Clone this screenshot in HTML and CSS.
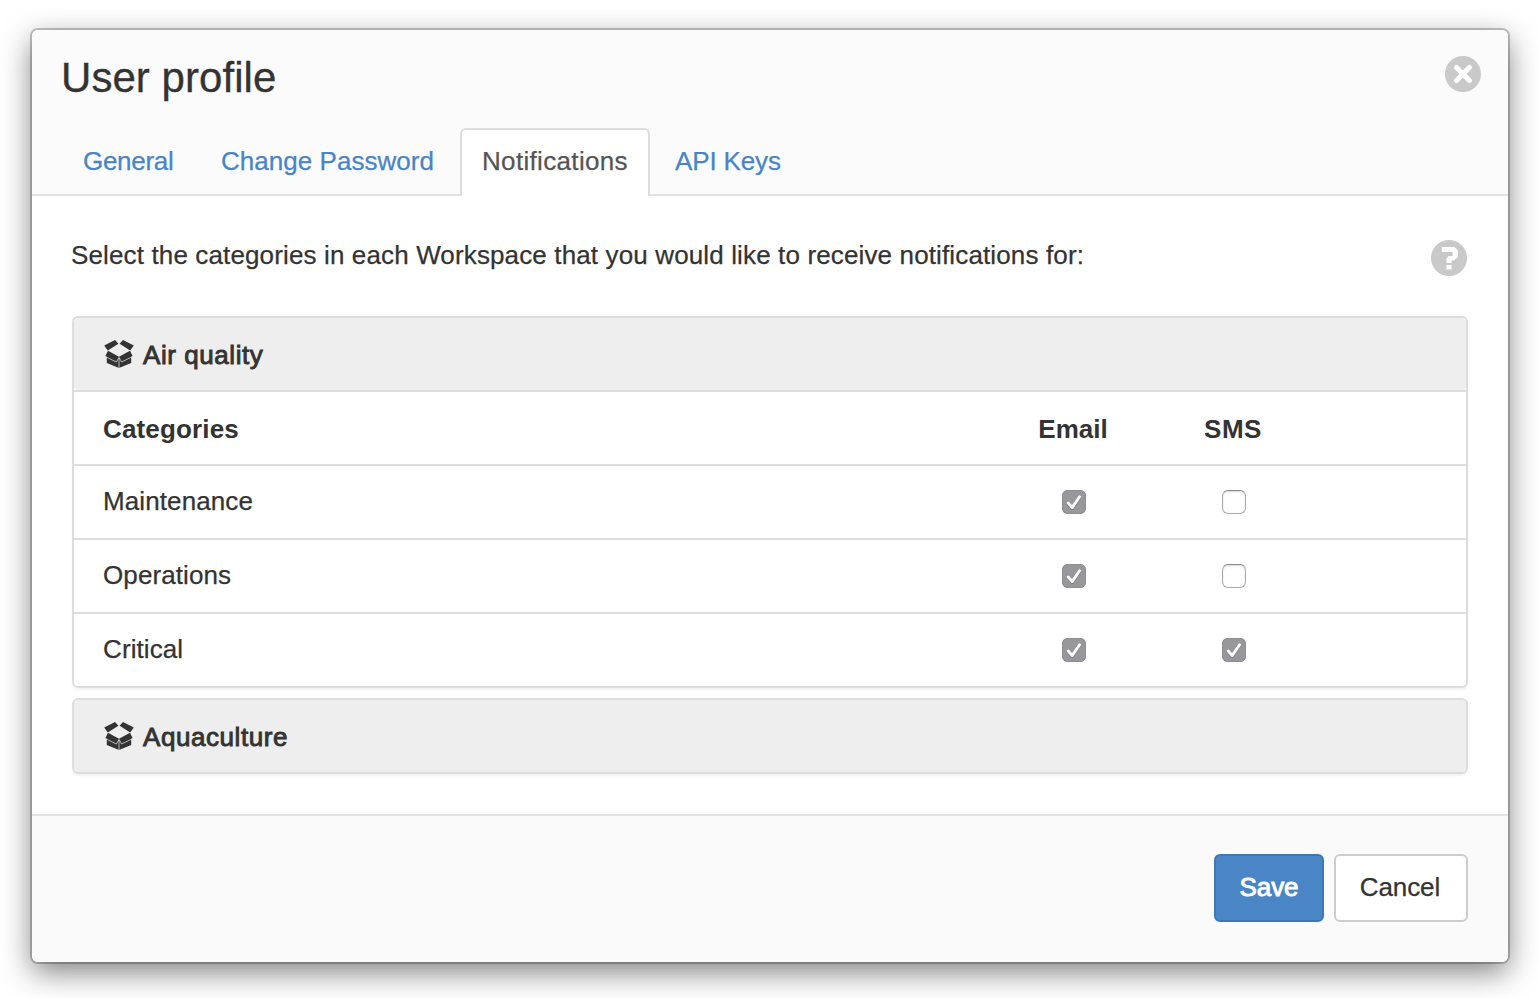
FILE: index.html
```html
<!DOCTYPE html>
<html lang="en">
<head>
<meta charset="utf-8">
<title>User profile</title>
<link rel="stylesheet" href="styles.css">
</head>
<body>
<svg class="defs" width="0" height="0" aria-hidden="true">
  <symbol id="box" viewBox="0 0 30 28">
    <path d="M11 0L14.4 3.8L3.8 10.6L0.2 5.4ZM19 0L15.6 3.8L26.2 10.6L29.8 5.4ZM4 10.8L15 16.8L26 10.8L28.6 16L27.2 17V23L15 28L2.8 23V17L1.4 16Z"/>
    <path d="M1.4 16.6L12.4 22L15 17.4L17.6 22L28.6 16.6M15 18V28" fill="none" stroke="#eee" stroke-width=".7"/>
  </symbol>
  <symbol id="tick" viewBox="0 0 24 24"><path d="M6.2 13L10.2 17.6L17.6 6.8" fill="none" stroke="#fff" stroke-width="2.8" stroke-linecap="round" stroke-linejoin="round"/></symbol>
</svg>
<main class="modal">
  <header class="head">
    <div class="title-row">
      <h1 class="title">User profile</h1>
      <button class="round" aria-label="Close"><svg width="36" height="36" viewBox="0 0 36 36"><circle cx="18" cy="18" r="18" fill="#c9c9c9"/><path d="M11.5 11.5L24.5 24.5M24.5 11.5L11.5 24.5" stroke="#fff" stroke-width="5" stroke-linecap="round"/></svg></button>
    </div>
    <nav class="tabs">
      <a class="tab general">General</a>
      <a class="tab password">Change Password</a>
      <a class="tab active">Notifications</a>
      <a class="tab api">API Keys</a>
    </nav>
  </header>
  <section class="body">
    <div class="intro">
      <p class="lead">Select the categories in each Workspace that you would like to receive notifications for:</p>
      <svg class="help" width="36" height="36" viewBox="0 0 36 36"><circle cx="18" cy="18" r="18" fill="#c9c9c9"/><path d="M10.8 7H23.5L27 10.4V16.8L23.6 20.2H20.6V23H15.4V18.4L17.8 16H21.6V12H10.8ZM15.4 25H20.6V29.6H15.4Z" fill="#fff"/></svg>
    </div>
    <div class="panel">
      <div class="panel-head"><svg class="box"><use href="#box"/></svg><span>Air quality</span></div>
      <div class="row heads"><span class="cats">Categories</span><span>Email</span><span class="sms">SMS</span></div>
      <div class="row"><span>Maintenance</span><span class="check on"><svg><use href="#tick"/></svg></span><span class="check"></span></div>
      <div class="row"><span>Operations</span><span class="check on"><svg><use href="#tick"/></svg></span><span class="check"></span></div>
      <div class="row"><span>Critical</span><span class="check on"><svg><use href="#tick"/></svg></span><span class="check on"><svg><use href="#tick"/></svg></span></div>
    </div>
    <div class="panel">
      <div class="panel-head"><svg class="box"><use href="#box"/></svg><span>Aquaculture</span></div>
    </div>
  </section>
  <footer class="foot">
    <button class="btn save">Save</button>
    <button class="btn cancel">Cancel</button>
  </footer>
</main>
</body>
</html>
```
FILE: styles.css
```css
* { box-sizing: border-box; }
body { margin: 0; padding: 30px 30px 36px 32px; height: 998px; overflow: hidden; background: #fff; color: #333; font: 26px/36px "Liberation Sans", Arial, sans-serif; }
.defs { display: block; }
.modal { width: 1476px; height: 932px; display: flex; flex-direction: column; background: #fff; border-radius: 6px; box-shadow: 0 0 0 2px rgba(0,0,0,.22), 0 10px 30px rgba(0,0,0,.5); }
.head { height: 166px; background: #fbfbfb; border-bottom: 2px solid #e3e3e3; border-radius: 6px 6px 0 0; }
.title-row { display: flex; justify-content: space-between; height: 98px; padding: 18px 27px 0 29px; }
.title { margin: 0; font-size: 42px; line-height: 60px; font-weight: 400; letter-spacing: .05px; -webkit-text-stroke: .3px #333; }
.round { width: 36px; height: 36px; margin-top: 8px; padding: 0; border: 0; background: none; }
.round svg, .help { display: block; }
.tabs { display: flex; gap: 4px; height: 68px; padding-left: 28px; }
.tab { height: 68px; padding: 13px 0 0 20px; border: 2px solid transparent; border-bottom: 0; border-radius: 6px 6px 0 0; color: #4785c7; white-space: nowrap; -webkit-text-stroke: .25px currentColor; }
.general { width: 135px; padding-left: 21px; letter-spacing: -.3px; }
.password { width: 257px; letter-spacing: .04px; }
.active { width: 190px; color: #555; background: #fff; border-color: #ddd; letter-spacing: .33px; }
.api { padding-left: 19px; letter-spacing: -.15px; }
.body { height: 618px; padding: 40px 40px 0; }
.intro { display: flex; justify-content: space-between; height: 80px; }
.lead { margin: 1px 0 0 -1px; white-space: nowrap; letter-spacing: .135px; -webkit-text-stroke: .25px #333; }
.help { margin: 4px 1px 0 0; }
.panel { margin-bottom: 10px; border: 2px solid #ddd; border-radius: 6px; box-shadow: 0 2px 2px rgba(0,0,0,.05); }
.panel-head { display: flex; align-items: center; gap: 9px; height: 72px; padding: 2px 30px 0; background: #eee; border-radius: 4px; letter-spacing: .56px; -webkit-text-stroke: .9px #333; }
.box { width: 30px; height: 28px; margin-top: -2px; fill: #333; }
.row { display: grid; grid-template-columns: 919px 160px 160px; align-items: center; height: 74px; border-top: 2px solid #ddd; }
.row > span { justify-self: center; }
.row > span:first-child { justify-self: start; margin-left: 29px; }
.row:not(.heads) > span:first-child { margin-top: -3px; letter-spacing: .1px; -webkit-text-stroke: .25px #333; }
.heads { font-weight: 700; }
.heads > span { margin-top: 2px; }
.cats { letter-spacing: .15px; }
.sms { letter-spacing: .5px; }
.check { width: 24px; height: 24px; margin: 0 0 0 2px; border: 1px solid #aaa; border-top-color: #888; border-radius: 6px; background: #fff; box-shadow: inset 0 1px 2px rgba(0,0,0,.15); }
.on { border: 0; background: #98979c; box-shadow: inset 0 0 0 1px #8e8d92; }
.check svg { display: block; width: 24px; height: 24px; filter: drop-shadow(0 1px 0 rgba(0,0,0,.2)); }
.foot { display: flex; justify-content: flex-end; gap: 10px; height: 148px; padding: 38px 40px 0; background: #fafafa; border-top: 2px solid #e3e3e3; border-radius: 0 0 6px 6px; }
.btn { height: 68px; padding: 0 0 2px; border-radius: 6px; font: inherit; }
.save { width: 110px; color: #fff; background: #4a86c5; border: 2px solid #3b78b8; letter-spacing: -.1px; -webkit-text-stroke: .9px #fff; }
.cancel { width: 134px; padding-right: 2px; color: #333; background: #fff; border: 2px solid #ccc; letter-spacing: -.1px; -webkit-text-stroke: .25px #333; }
```
